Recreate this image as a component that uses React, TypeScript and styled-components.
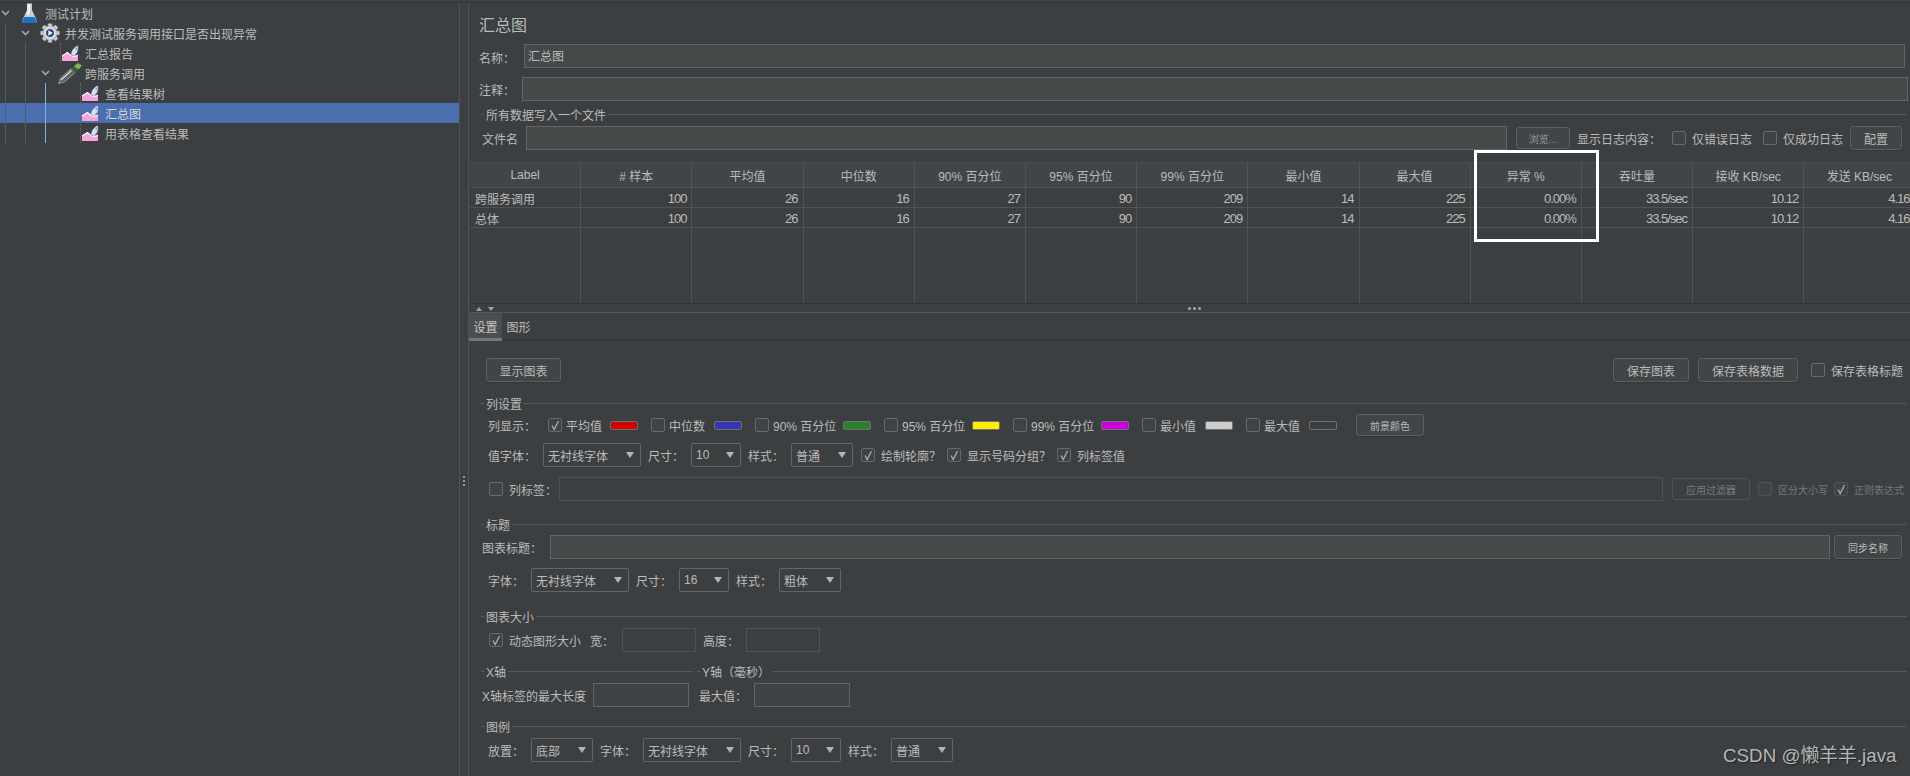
import React from 'react';
import styled, { createGlobalStyle } from 'styled-components';

const GlobalStyle = createGlobalStyle`
  html, body {
    margin: 0;
    background: #3c3f41;
  }
  * {
    box-sizing: border-box;
  }
`;

const Root = styled.div`
  position: relative;
  width: 1910px;
  height: 776px;
  overflow: hidden;
  background: #3c3f41;
  color: #bbbbbb;
  font-family: "Liberation Sans", "Noto Sans CJK SC", sans-serif;
  font-size: 12px;
  display: flex;
  flex-direction: column;
`;

const TopStrip = styled.div`
  height: 3px;
  flex: none;
  background: #3f4244;
  border-bottom: 1px solid #323436;
`;

const Body = styled.div`
  flex: 1;
  display: flex;
  min-height: 0;
`;

/* tree */
const TreePanel = styled.div`
  position: relative;
  width: 460px;
  flex: none;
  border-right: 1px solid #4f5254;
`;

const TreeRow = styled.div<{ $depth: number; $selected?: boolean }>`
  height: 20px;
  display: flex;
  align-items: center;
  padding-left: ${p => p.$depth * 20}px;
  background: ${p => (p.$selected ? '#4b6eaf' : 'transparent')};
  color: ${p => (p.$selected ? '#d8d8d8' : '#bbbbbb')};
  white-space: nowrap;
`;

const Chevron = styled.span`
  width: 20px;
  flex: none;
  display: flex;
  padding-left: 1px;
`;

const IconCell = styled.span`
  width: 25px;
  height: 20px;
  flex: none;
  display: flex;
  align-items: center;
`;

const NudgedSvg = styled.svg<{ $ml: number }>`
  flex: none;
  margin-left: ${p => p.$ml}px;
  overflow: visible;
`;

const Guide = styled.div<{ $x: number; $top: number; $h: number; $color: string; $dotted?: boolean }>`
  position: absolute;
  left: ${p => p.$x}px;
  top: ${p => p.$top}px;
  height: ${p => p.$h}px;
  border-left: 1px ${p => (p.$dotted ? 'dotted' : 'solid')} ${p => p.$color};
`;

const SideGrip = styled.div`
  width: 9px;
  flex: none;
  border-right: 1px solid #505354;
  display: flex;
  flex-direction: column;
  align-items: center;
  justify-content: center;
  gap: 2px;
  padding-top: 182px;
`;

const GripDot = styled.i`
  width: 2px;
  height: 2px;
  background: #9a9a9a;
`;

/* right pane */
const Pane = styled.div`
  flex: 1;
  min-width: 0;
  display: flex;
  flex-direction: column;
`;

const Title = styled.div`
  margin: 12px 0 0 10px;
  height: 20px;
  line-height: 22px;
  font-size: 16px;
`;

const Row = styled.div<{ $top: number; $left: number; $right?: number; $h?: number; $gap?: number; $between?: boolean }>`
  margin-top: ${p => p.$top}px;
  padding-left: ${p => p.$left}px;
  padding-right: ${p => p.$right ?? 0}px;
  height: ${p => p.$h ?? 24}px;
  display: flex;
  align-items: center;
  gap: ${p => p.$gap ?? 7}px;
  justify-content: ${p => (p.$between ? 'space-between' : 'flex-start')};
  white-space: nowrap;
`;

const Label = styled.span<{ $w?: number; $ml?: number; $dim?: boolean; $small?: boolean; $low?: boolean }>`
  flex: none;
  width: ${p => (p.$w ? `${p.$w}px` : 'auto')};
  margin-left: ${p => p.$ml ?? 0}px;
  padding-top: ${p => (p.$low ? 2 : 0)}px;
  color: ${p => (p.$dim ? '#777a7c' : 'inherit')};
  font-size: ${p => (p.$small ? 10 : 12)}px;
`;

const Field = styled.div<{ $w?: number; $tone?: 'field' | 'soft' | 'off' }>`
  flex: ${p => (p.$w ? 'none' : '1')};
  width: ${p => (p.$w ? `${p.$w}px` : 'auto')};
  height: 24px;
  padding-left: 3px;
  line-height: 24px;
  background: ${p => (p.$tone === 'soft' ? '#404345' : p.$tone === 'off' ? 'transparent' : '#45494a')};
  border: 1px solid ${p => (p.$tone === 'off' ? '#505354' : '#646464')};
`;

const Button = styled.div<{ $w: number; $h?: number; $ml?: number; $small?: boolean; $off?: boolean; $muted?: boolean }>`
  flex: none;
  width: ${p => p.$w}px;
  height: ${p => p.$h ?? 24}px;
  margin-left: ${p => p.$ml ?? 0}px;
  display: flex;
  align-items: center;
  justify-content: center;
  font-size: ${p => (p.$small ? 10 : 12)}px;
  color: ${p => (p.$off ? '#777a7c' : p.$muted ? '#95979a' : '#bbbbbb')};
  background: ${p => (p.$off ? 'transparent' : '#414547')};
  border: 1px solid ${p => (p.$off ? '#505354' : '#5e6060')};
  border-radius: 3px;
  box-shadow: ${p => (p.$off ? 'none' : '0 1px 1px #333537')};
`;

const RightButtons = styled.div`
  display: flex;
  align-items: center;
`;

const SaveBtnGap = styled.span<{ $w: number }>`
  width: ${p => p.$w}px;
`;

const Box = styled.span<{ $off?: boolean }>`
  width: 14px;
  height: 14px;
  flex: none;
  display: flex;
  align-items: center;
  justify-content: center;
  background: #404345;
  border: 1px solid ${p => (p.$off ? '#505354' : '#666a6c')};
  border-radius: 2px;
`;

const CheckWrap = styled.span<{ $ml?: number; $gap?: number }>`
  display: flex;
  align-items: center;
  flex: none;
  gap: ${p => p.$gap ?? 6}px;
  margin-left: ${p => p.$ml ?? 0}px;
`;

const SelectBox = styled.div<{ $w: number }>`
  width: ${p => p.$w}px;
  height: 24px;
  flex: none;
  display: flex;
  align-items: center;
  justify-content: space-between;
  padding: 0 6px 0 4px;
  border: 1px solid #646464;
  border-radius: 2px;
`;

const Caret = styled.i`
  width: 0;
  height: 0;
  border-left: 4.5px solid transparent;
  border-right: 4.5px solid transparent;
  border-top: 6px solid #b4b4b4;
`;

const Swatch = styled.span<{ $c: string }>`
  width: 28px;
  height: 9px;
  flex: none;
  background: ${p => p.$c};
  border: 1px solid #707070;
  border-radius: 2px;
`;

const GroupRow = styled.div<{ $top: number }>`
  margin-top: ${p => p.$top}px;
  padding: 0 4px 0 12px;
  display: flex;
  gap: 4px;
`;

const Group = styled.div<{ $w?: number }>`
  flex: ${p => (p.$w ? 'none' : '1')};
  width: ${p => (p.$w ? `${p.$w}px` : 'auto')};
  height: 16px;
  display: flex;
  align-items: center;
  &::before {
    content: '';
    width: 3px;
    height: 1px;
    margin-right: 2px;
    background: #585b5d;
  }
  &::after {
    content: '';
    flex: 1;
    height: 1px;
    margin-left: 2px;
    background: #585b5d;
  }
`;

/* results table */
const Table = styled.div`
  margin: 12px 0 0 1px;
  display: grid;
  grid-template-columns: repeat(13, 111.2px);
  grid-template-rows: 26px 20px 20px 75px;
  height: 142px;
  overflow: hidden;
  border-bottom: 1px solid #2f3133;
`;

const HeadCell = styled.div`
  display: flex;
  align-items: center;
  justify-content: center;
  background: #414547;
  border-top: 1px solid #4a4d4f;
  border-right: 1px solid #505355;
  border-bottom: 1px solid #505355;
`;

const Cell = styled.div<{ $left?: boolean; $empty?: boolean }>`
  display: flex;
  align-items: center;
  justify-content: ${p => (p.$left ? 'flex-start' : 'flex-end')};
  padding: 1px 5px 0;
  border-right: 1px solid #505355;
  border-bottom: ${p => (p.$empty ? 'none' : '1px solid #505355')};
  font-size: ${p => (p.$left ? 12 : 13)}px;
  letter-spacing: ${p => (p.$left ? 0 : -1)}px;
`;

const Splitter = styled.div`
  height: 9px;
  flex: none;
  display: flex;
  align-items: center;
  padding: 1px 0 0 7px;
  gap: 6px;
  border-bottom: 1px solid #555859;
`;

const ArrowUp = styled.i`
  border-left: 3px solid transparent;
  border-right: 3px solid transparent;
  border-bottom: 4px solid #a0a0a0;
`;

const ArrowDown = styled.i`
  border-left: 3px solid transparent;
  border-right: 3px solid transparent;
  border-top: 4px solid #a0a0a0;
`;

const SplitDots = styled.span`
  margin-left: 688px;
  display: flex;
  gap: 2px;
`;

const SplitDot = styled.i`
  width: 3px;
  height: 3px;
  border-radius: 50%;
  background: #a8a8a8;
`;

const Tabs = styled.div`
  height: 28px;
  flex: none;
  display: flex;
  border-bottom: 1px solid #323537;
`;

const Tab = styled.div<{ $active?: boolean }>`
  width: 33px;
  height: 28px;
  padding-top: 2px;
  display: flex;
  align-items: center;
  justify-content: center;
  background: ${p => (p.$active ? '#4a4e50' : 'transparent')};
  border-bottom: 3px solid ${p => (p.$active ? '#74777a' : 'transparent')};
  color: ${p => (p.$active ? '#c8c8c8' : '#bbbbbb')};
`;

const Highlight = styled.div`
  position: absolute;
  left: 1474px;
  top: 150px;
  width: 125px;
  height: 92px;
  border: 3px solid #ffffff;
`;

const Watermark = styled.div`
  position: absolute;
  left: 1723px;
  top: 745px;
  font-size: 18.8px;
  line-height: 22px;
  color: #b4b6b7;
  text-shadow: 1px 1px 1px #222426;
  white-space: nowrap;
`;

const ChevronIcon = () => (
  <svg width="9" height="6" viewBox="0 0 9 6">
    <path d="M1 1l3.5 3.5L8 1" fill="none" stroke="#a4a6a8" strokeWidth="1.6" />
  </svg>
);

const FlaskIcon = () => (
  <NudgedSvg $ml={2} width="15" height="20" viewBox="0 0 15 20">
    <path d="M5 0h5v7l5 11c0 1-1 2-2 2H2c-1 0-2-1-2-2L5 7z" fill="#c9ced6" />
    <path d="M6 0h2v8l-1 4H5z" fill="#f4f6fa" />
    <path d="M2.6 14h9.8l2.4 4c0 1-1 2-2 2H2c-1 0-2-1-2-2z" fill="#1c70c8" />
    <path d="M5 0h5v1H5z" fill="#8a8f96" />
  </NudgedSvg>
);

const GearIcon = () => (
  <NudgedSvg $ml={-2} width="24" height="20" viewBox="0 0 24 24">
    <g fill="#cfcfcf" stroke="#7a7a7a" strokeWidth="0.6">
      {[0, 45, 90, 135, 180, 225, 270, 315].map(a => (
        <rect key={a} x="9.5" y="0.5" width="5" height="6" rx="1" transform={`rotate(${a} 12 12)`} />
      ))}
    </g>
    <circle cx="12" cy="12" r="8.6" fill="#d6d6d6" stroke="#8a8a8a" strokeWidth="0.6" />
    <circle cx="12" cy="12" r="5.4" fill="#24487f" stroke="#f2f5f9" strokeWidth="1" />
    <path d="M10 8.8l5.4 3.2-5.4 3.2z" fill="#eef3fa" />
  </NudgedSvg>
);

const ChartIcon = () => (
  <NudgedSvg $ml={2} width="16" height="15" viewBox="0 0 16 15">
    <path d="M0 15V10L5.5 6.5l4 3.5 6.5-1.5V15z" fill="#f3a4dc" />
    <path d="M0 10L5.5 6.5l4 3.5" fill="none" stroke="#fff" strokeWidth="1.1" />
    <path d="M9.5 10c3 1 6 .5 6.5-1" fill="none" stroke="#fff" strokeWidth="0.9" />
    <path d="M9.5 8.5C9.5 5 12 1.5 15.6 0c.6 3.5-.4 7.2-3.6 9.5z" fill="#cfe0f8" stroke="#ffffff" strokeWidth="0.5" />
    <path d="M13 3c.8-.9 1.6-1.6 2.5-2.2.2 1.5 0 2.8-.4 4z" fill="#7fa6e4" />
  </NudgedSvg>
);

const PipetteIcon = () => (
  <NudgedSvg $ml={-2} width="24" height="21" viewBox="0 0 24 21">
    <path d="M0.5 20.5L2.5 15 13 5.5l4 4L6.5 19z" fill="#5f6264" stroke="#a6a8aa" strokeWidth="0.8" />
    <path d="M3 17L13.5 7.5" stroke="#e0e0e0" strokeWidth="1.1" />
    <path d="M13 5.5l4-3 3.5 3.5-3.5 3.5z" fill="#3f5f3b" />
    <path d="M16 3l4-3 4 2.5-3.5 4z" fill="#7ab85f" />
  </NudgedSvg>
);

const TickIcon = () => (
  <svg width="10" height="11" viewBox="0 0 10 11">
    <path d="M2 5.5l2.2 4L8.5 1" fill="none" stroke="#a6a8aa" strokeWidth="1.4" />
  </svg>
);

const Check = ({ text, w, checked, ml, off, small }: {
  text: string; w: number; checked?: boolean; ml?: number; off?: boolean; small?: boolean;
}) => (
  <CheckWrap $ml={ml}>
    <Box $off={off}>{checked && <TickIcon />}</Box>
    <Label $w={w} $dim={off} $small={small}>{text}</Label>
  </CheckWrap>
);

const Select = ({ value, w }: { value: string; w: number }) => (
  <SelectBox $w={w}>
    <span>{value}</span>
    <Caret />
  </SelectBox>
);

const treeItems = [
  { depth: 0, text: '测试计划', icon: <FlaskIcon />, open: true },
  { depth: 1, text: '并发测试服务调用接口是否出现异常', icon: <GearIcon />, open: true },
  { depth: 2, text: '汇总报告', icon: <ChartIcon /> },
  { depth: 2, text: '跨服务调用', icon: <PipetteIcon />, open: true },
  { depth: 3, text: '查看结果树', icon: <ChartIcon /> },
  { depth: 3, text: '汇总图', icon: <ChartIcon />, selected: true },
  { depth: 3, text: '用表格查看结果', icon: <ChartIcon /> },
];

const headers = ['Label', '# 样本', '平均值', '中位数', '90% 百分位', '95% 百分位', '99% 百分位', '最小值', '最大值', '异常 %', '吞吐量', '接收 KB/sec', '发送 KB/sec'];
const numbers = ['100', '26', '16', '27', '90', '209', '14', '225', '0.00%', '33.5/sec', '10.12', '4.16'];

const columnItems = [
  { text: '平均值', w: 40, color: '#d40000', checked: true },
  { text: '中位数', w: 41, color: '#3535b8' },
  { text: '90% 百分位', w: 66, color: '#2c7f2c' },
  { text: '95% 百分位', w: 66, color: '#ffee00' },
  { text: '99% 百分位', w: 66, color: '#cc00dd' },
  { text: '最小值', w: 41, color: '#cccccc' },
  { text: '最大值', w: 41, color: '#3c3f41' },
];

export default function App() {
  return (
    <Root>
      <GlobalStyle />
      <TopStrip />
      <Body>
        <TreePanel>
          {treeItems.map(item => (
            <TreeRow key={item.text} $depth={item.depth} $selected={item.selected}>
              <Chevron>{item.open && <ChevronIcon />}</Chevron>
              <IconCell>{item.icon}</IconCell>
              {item.text}
            </TreeRow>
          ))}
          <Guide $x={5} $top={20} $h={120} $color="#585b5d" />
          <Guide $x={25} $top={40} $h={100} $color="#585b5d" />
          <Guide $x={45} $top={80} $h={60} $color="#7fb4e6" />
          <Guide $x={60} $top={40} $h={20} $color="#6a6d6f" $dotted />
          <Guide $x={80} $top={80} $h={60} $color="#6a6d6f" $dotted />
        </TreePanel>
        <SideGrip>
          <GripDot />
          <GripDot />
          <GripDot />
        </SideGrip>
        <Pane>
          <Title>汇总图</Title>
          <Row $top={9} $left={10} $right={5}>
            <Label $w={38} $low>名称：</Label>
            <Field>汇总图</Field>
          </Row>
          <Row $top={9} $left={10} $right={2}>
            <Label $w={36}>注释：</Label>
            <Field />
          </Row>
          <GroupRow $top={5}>
            <Group>所有数据写入一个文件</Group>
          </GroupRow>
          <Row $top={4} $left={13}>
            <Label $w={37}>文件名</Label>
            <Field $w={981} />
            <Button $w={54} $h={22} $ml={2} $small $muted>浏览...</Button>
            <Label $w={88}>显示日志内容：</Label>
            <Check text="仅错误日志" w={64} />
            <Check text="仅成功日志" w={60} />
            <Button $w={52}>配置</Button>
          </Row>

          <Table>
            {headers.map(h => <HeadCell key={h}>{h}</HeadCell>)}
            {['跨服务调用', '总体'].map(name => (
              <React.Fragment key={name}>
                <Cell $left>{name}</Cell>
                {numbers.map((n, i) => <Cell key={i}>{n}</Cell>)}
              </React.Fragment>
            ))}
            {headers.map(h => <Cell key={h} $empty />)}
          </Table>

          <Splitter>
            <ArrowUp />
            <ArrowDown />
            <SplitDots>
              <SplitDot />
              <SplitDot />
              <SplitDot />
            </SplitDots>
          </Splitter>
          <Tabs>
            <Tab $active>设置</Tab>
            <Tab>图形</Tab>
          </Tabs>

          <Row $top={17} $left={17} $right={7} $between>
            <Button $w={75}>显示图表</Button>
            <RightButtons>
              <Button $w={76}>保存图表</Button>
              <SaveBtnGap $w={9} />
              <Button $w={100}>保存表格数据</Button>
              <SaveBtnGap $w={13} />
              <Check text="保存表格标题" w={72} />
            </RightButtons>
          </Row>

          <GroupRow $top={13}>
            <Group>列设置</Group>
          </GroupRow>
          <Row $top={3} $left={19} $h={22} $gap={13}>
            <Label $w={47}>列显示：</Label>
            {columnItems.map(item => (
              <CheckWrap key={item.text} $gap={4}>
                <Box>{item.checked && <TickIcon />}</Box>
                <Label $w={item.w}>{item.text}</Label>
                <Swatch $c={item.color} />
              </CheckWrap>
            ))}
            <Button $w={68} $h={22} $ml={6} $small>前景颜色</Button>
          </Row>
          <Row $top={7} $left={19}>
            <Label $w={48}>值字体：</Label>
            <Select value="无衬线字体" w={98} />
            <Label $w={36}>尺寸：</Label>
            <Select value="10" w={50} />
            <Label $w={36}>样式：</Label>
            <Select value="普通" w={62} />
            <Check text="绘制轮廓？" w={59} checked ml={1} />
            <Check text="显示号码分组？" w={83} checked />
            <Check text="列标签值" w={50} checked />
          </Row>
          <Row $top={10} $left={20}>
            <Check text="列标签：" w={43} />
            <Field $w={1104} $tone="off" />
            <Button $w={78} $h={22} $ml={2} $small $off>应用过滤器</Button>
            <Check text="区分大小写" w={49} ml={1} off small />
            <Check text="正则表达式" w={50} checked off small />
          </Row>

          <GroupRow $top={15}>
            <Group>标题</Group>
          </GroupRow>
          <Row $top={3} $left={13}>
            <Label $w={61}>图表标题：</Label>
            <Field $w={1280} />
            <Button $w={68} $ml={-3} $small>同步名称</Button>
          </Row>
          <Row $top={9} $left={19}>
            <Label $w={36}>字体：</Label>
            <Select value="无衬线字体" w={98} />
            <Label $w={36}>尺寸：</Label>
            <Select value="16" w={50} />
            <Label $w={36}>样式：</Label>
            <Select value="粗体" w={62} />
          </Row>

          <GroupRow $top={16}>
            <Group>图表大小</Group>
          </GroupRow>
          <Row $top={4} $left={20}>
            <Check text="动态图形大小" w={71} checked />
            <Label $w={25} $ml={3}>宽：</Label>
            <Field $w={74} $tone="off" />
            <Label $w={36}>高度：</Label>
            <Field $w={74} $tone="off" />
          </Row>

          <GroupRow $top={11}>
            <Group $w={212}>X轴</Group>
            <Group>Y轴（毫秒）</Group>
          </GroupRow>
          <Row $top={4} $left={13}>
            <Label $w={104}>X轴标签的最大长度</Label>
            <Field $w={96} $tone="soft" />
            <Label $w={48} $ml={3}>最大值：</Label>
            <Field $w={96} $tone="soft" />
          </Row>

          <GroupRow $top={11}>
            <Group>图例</Group>
          </GroupRow>
          <Row $top={4} $left={19}>
            <Label $w={36}>放置：</Label>
            <Select value="底部" w={62} />
            <Label $w={36}>字体：</Label>
            <Select value="无衬线字体" w={98} />
            <Label $w={36}>尺寸：</Label>
            <Select value="10" w={50} />
            <Label $w={36}>样式：</Label>
            <Select value="普通" w={62} />
          </Row>
        </Pane>
      </Body>
      <Highlight />
      <Watermark>CSDN @懒羊羊.java</Watermark>
    </Root>
  );
}
